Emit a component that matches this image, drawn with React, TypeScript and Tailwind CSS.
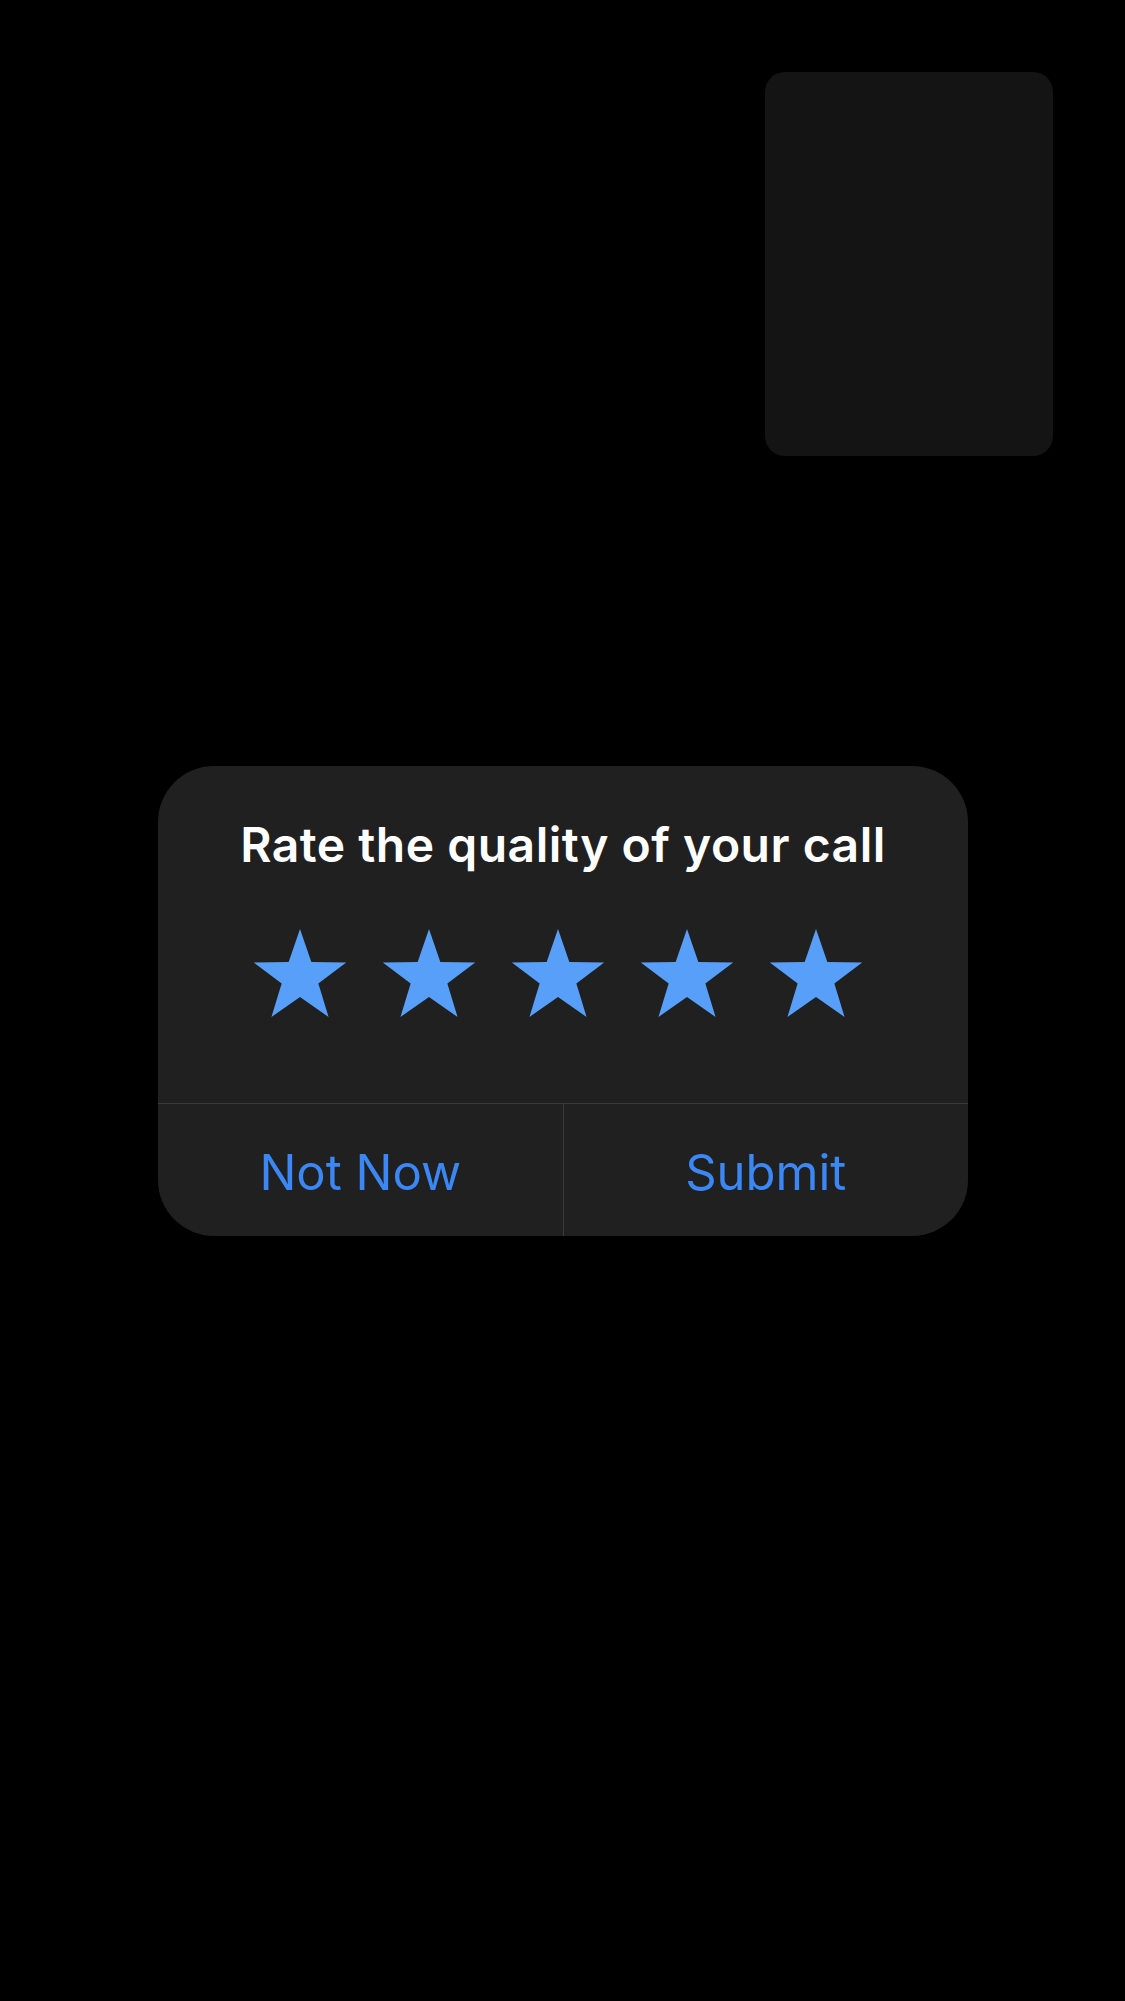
import React from 'react'

const STAR_POINTS =
  '46,0 57.34,32.99 92.22,33.58 64.36,54.56 74.57,87.92 46,67.9 17.43,87.92 27.64,54.56 -0.22,33.58 34.66,32.99'

function Star() {
  return (
    <svg width="92" height="88" viewBox="0 0 92 88" className="overflow-visible shrink-0">
      <polygon points={STAR_POINTS} fill="#579ff8" />
    </svg>
  )
}

export default function App() {
  return (
    <div className="min-h-[2001px] w-[1125px] bg-black pt-[72px] font-['Inter',_'Noto_Sans',_sans-serif]">
      {/* self-view preview */}
      <div className="ml-[765px] h-[384px] w-[288px] rounded-[20px] bg-[#141414]" />

      {/* rating dialog */}
      <div className="ml-[158px] mt-[310px] flex h-[470px] w-[810px] flex-col overflow-hidden rounded-[56px] bg-[#202020]">
        <div className="flex h-[338px] flex-col border-b border-[#3a3a3a]">
          <h1 className="pt-[55px] text-center text-[48px] font-semibold leading-[48px] tracking-[0.5px] text-white">
            Rate the quality of your call
          </h1>
          <div className="mt-[60px] flex gap-[37px] pl-[96px]">
            {[0, 1, 2, 3, 4].map((i) => (
              <Star key={i} />
            ))}
          </div>
        </div>
        <div className="flex flex-1">
          <button className="flex flex-1 items-center justify-center border-r border-[#3a3a3a] pt-[4px] text-[49px] leading-none text-[#3b87f5]">
            Not Now
          </button>
          <button className="flex flex-1 items-center justify-center pt-[4px] text-[49px] leading-none text-[#3b87f5]">
            Submit
          </button>
        </div>
      </div>
    </div>
  )
}
